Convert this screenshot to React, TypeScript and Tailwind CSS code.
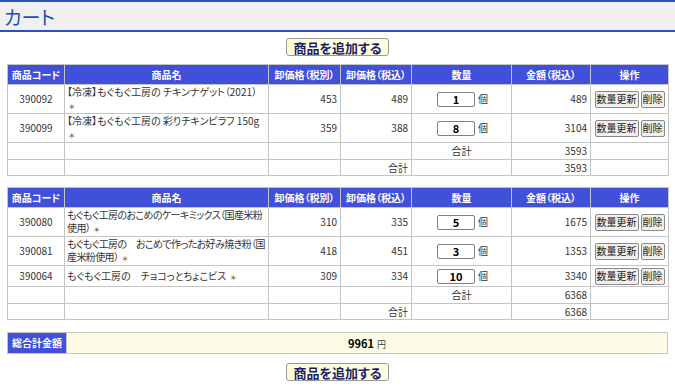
const font = { fontFamily: '"Noto Sans CJK JP", "Noto Sans", sans-serif' };

type Item = { code: string; name: string[]; ex: number; inc: number; qty: number; amount: number; tight?: boolean };

const cart1: Item[] = [
  { code: "390092", name: ["【冷凍】もぐもぐ工房の チキンナゲット（2021）", ""], ex: 453, inc: 489, qty: 1, amount: 489 },
  { code: "390099", name: ["【冷凍】もぐもぐ工房の 彩りチキンピラフ 150g", ""], ex: 359, inc: 388, qty: 8, amount: 3104 },
];

const cart2: Item[] = [
  { code: "390080", name: ["もぐもぐ工房のおこめのケーキミックス（国産米粉", "使用） "], ex: 310, inc: 335, qty: 5, amount: 1675, tight: true },
  { code: "390081", name: ["もぐもぐ工房の　おこめで作ったお好み焼き粉（国", "産米粉使用） "], ex: 418, inc: 451, qty: 3, amount: 1353, tight: true },
  { code: "390064", name: ["もぐもぐ工房の　チョコっとちょこビス "], ex: 309, inc: 334, qty: 10, amount: 3340 },
];

const th = "border border-[#c4c4c4] bg-[#4150d8] text-white font-bold text-[10px] h-[20px] p-0 whitespace-nowrap overflow-hidden";
const td = "border border-[#c4c4c4] text-[10px] text-[#333] px-[3px] py-0 whitespace-nowrap";

function AddButton() {
  return (
    <div className="flex justify-center">
      <button className="h-[18px] px-[6px] bg-[#ffffe0] border border-[#9a9a9a] rounded-[3px] text-[13px] font-bold text-[#1c1c6a] leading-none">
        商品を追加する
      </button>
    </div>
  );
}

function CartTable({ items, total }: { items: Item[]; total: number }) {
  return (
    <table className="w-[661px] mx-[7px] border-collapse table-fixed border border-[#c4c4c4]">
      <colgroup>
        <col className="w-[57px]" />
        <col className="w-[204px]" />
        <col className="w-[72px]" />
        <col className="w-[71px]" />
        <col className="w-[100px]" />
        <col className="w-[79px]" />
        <col className="w-[78px]" />
      </colgroup>
      <thead>
        <tr>
          <th className={th}>商品コード</th>
          <th className={th}>商品名</th>
          <th className={th}>卸価格（税別）</th>
          <th className={th}>卸価格（税込）</th>
          <th className={th}>数量</th>
          <th className={th}>金額（税込）</th>
          <th className={th}>操作</th>
        </tr>
      </thead>
      <tbody>
        {items.map((it) => (
          <tr key={it.code} className={it.name.length > 1 ? "h-[29px]" : "h-[21px]"}>
            <td className={`${td} text-center`}>{it.code}</td>
            <td className={`${td} leading-[13px] pl-[2px] overflow-hidden ${it.tight ? "tracking-[-0.6px]" : ""}`}>
              {it.name.map((l, i) => (
                <div key={i}>
                  {l}
                  {i === it.name.length - 1 && <span className="text-[7px] ml-[2px]">＊</span>}
                </div>
              ))}
            </td>
            <td className={`${td} text-right`}>{it.ex}</td>
            <td className={`${td} text-right`}>{it.inc}</td>
            <td className={td}>
              <div className="flex items-center pl-[22px] gap-[3px]">
                <input
                  readOnly
                  value={it.qty}
                  className="w-[38px] h-[15px] border border-[#808080] rounded-[2px] text-center text-[11px] font-bold text-black bg-white outline-none"
                />
                <span>個</span>
              </div>
            </td>
            <td className={`${td} text-right`}>{it.amount}</td>
            <td className={`${td} px-[2px]`}>
              <div className="flex gap-[2px] justify-center">
                <button className="h-[17px] px-[1px] border border-[#8a8a8a] rounded-[2px] bg-[#efefef] text-[10px] text-[#222] leading-none">数量更新</button>
                <button className="h-[17px] px-[1px] border border-[#8a8a8a] rounded-[2px] bg-[#efefef] text-[10px] text-[#222] leading-none">削除</button>
              </div>
            </td>
          </tr>
        ))}
        <tr className="h-[17px]">
          <td className={td}></td>
          <td className={td}></td>
          <td className={td}></td>
          <td className={td}></td>
          <td className={`${td} text-center`}>合計</td>
          <td className={`${td} text-right`}>{total}</td>
          <td className={td}></td>
        </tr>
        <tr className="h-[16px]">
          <td className={td}></td>
          <td className={td}></td>
          <td className={td}></td>
          <td className={`${td} text-right`}>合計</td>
          <td className={td}></td>
          <td className={`${td} text-right`}>{total}</td>
          <td className={td}></td>
        </tr>
      </tbody>
    </table>
  );
}

export default function App() {
  return (
    <div className="w-[675px] h-[390px] bg-white overflow-hidden leading-[14px] [font-feature-settings:'palt']" style={font}>
      <div className="border-t-2 border-b-2 border-[#2a52b8] bg-[#f0f0f0] h-[32px] flex items-center px-[4px]">
        <h1 className="text-[19px] text-[#1f4fb0] leading-none">カート</h1>
      </div>
      <div className="mt-[6px]">
        <AddButton />
      </div>
      <div className="mt-[8px]">
        <CartTable items={cart1} total={3593} />
      </div>
      <div className="mt-[11px]">
        <CartTable items={cart2} total={6368} />
      </div>
      <table className="w-[661px] mx-[7px] mt-[12px] border-collapse table-fixed border border-[#c4c4c4]">
        <tbody>
          <tr className="h-[21px]">
            <td className="w-[59px] bg-[#4150d8] text-white text-[10px] font-bold text-center border border-[#c4c4c4] p-0">総合計金額</td>
            <td className="bg-[#fcfce6] text-center border border-[#c4c4c4] p-0 text-black">
              <span className="text-[11px] font-bold">9961</span>
              <span className="text-[9px] text-[#444] ml-[3px]">円</span>
            </td>
          </tr>
        </tbody>
      </table>
      <div className="mt-[9px]">
        <AddButton />
      </div>
    </div>
  );
}
